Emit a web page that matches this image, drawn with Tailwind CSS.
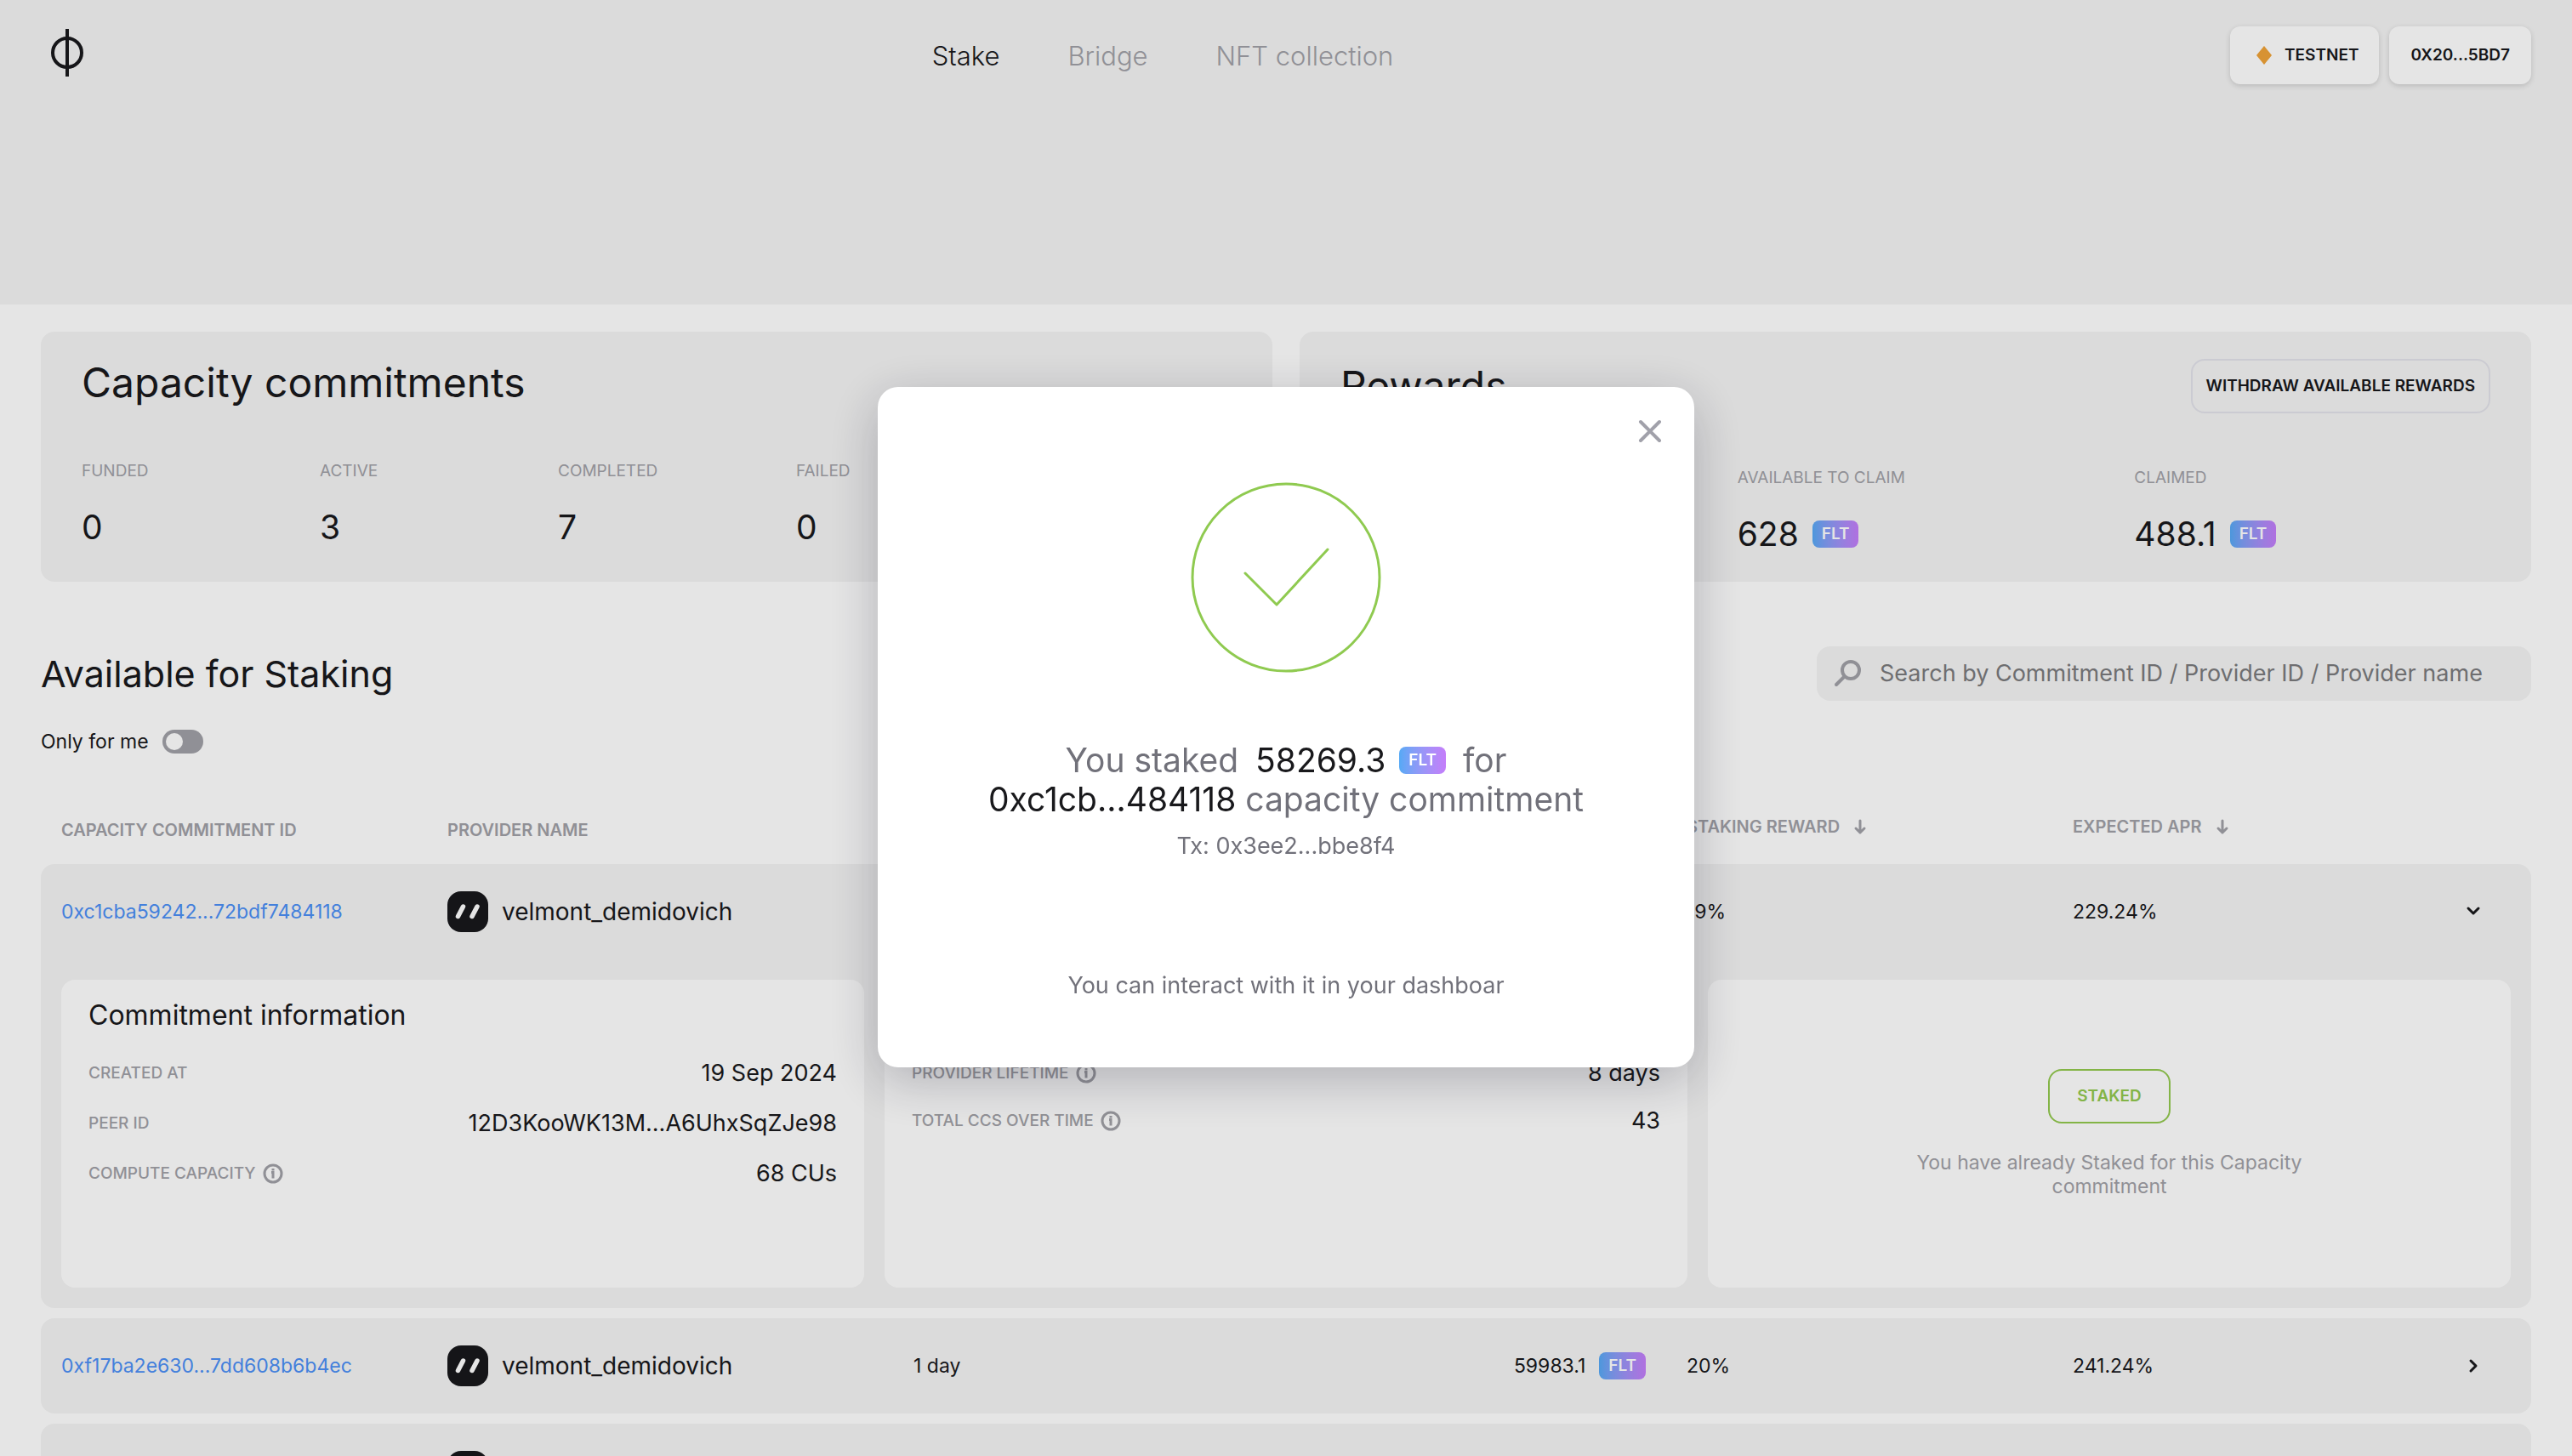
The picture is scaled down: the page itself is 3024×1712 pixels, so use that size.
<!DOCTYPE html>
<html lang="en">
<head>
<meta charset="utf-8">
<title>Stake</title>
<script src="https://cdn.jsdelivr.net/npm/@tailwindcss/browser@4"></script>
</head>
<body class="h-screen overflow-hidden bg-white font-['Inter',sans-serif] text-[#19191c]">

<header class="flex h-[358px] items-start justify-between bg-[#f4f4f4] px-12 pt-[31px]">
  <a href="#" aria-label="Home" class="flex w-16 justify-center pt-[3px]">
    <svg class="h-14 w-10" viewBox="0 0 40 56" fill="none" stroke="currentColor" stroke-width="4"><circle cx="19" cy="28" r="17"/><path d="M19 0v56"/></svg>
  </a>
  <nav class="flex h-[70px] items-center gap-20 text-[31px] leading-10 font-light text-[#a1a1a7]">
    <a href="#" class="text-[#19191c]">Stake</a>
    <a href="#">Bridge</a>
    <a href="#">NFT collection</a>
  </nav>
  <div class="flex gap-3 text-[19px] font-semibold">
    <button class="flex h-[68px] items-center gap-3 rounded-xl bg-white pr-6 pl-7 shadow-[0_2px_6px_rgba(0,0,0,0.15)]">
      <svg class="h-6 w-6" viewBox="0 0 24 24" fill="#f0a338"><path d="M12 1l9 11-9 11-9-11z"/></svg>
      TESTNET
    </button>
    <button class="h-[68px] rounded-xl bg-white px-[25px] shadow-[0_2px_6px_rgba(0,0,0,0.15)]">0X20...5BD7</button>
  </div>
</header>

<main class="px-12 pt-8">
  <div class="grid grid-cols-2 gap-8">
    <section class="rounded-2xl bg-[#f4f4f4] px-12 pt-8 pb-8">
      <h2 class="text-[48px] leading-14">Capacity commitments</h2>
      <dl class="mt-16 grid grid-cols-5 gap-12">
        <div><dt class="text-[19px] leading-6 text-[#a1a1a7]">FUNDED</dt><dd class="mt-[30px] text-[39px] leading-12">0</dd></div>
        <div><dt class="text-[19px] leading-6 text-[#a1a1a7]">ACTIVE</dt><dd class="mt-[30px] text-[39px] leading-12">3</dd></div>
        <div><dt class="text-[19px] leading-6 text-[#a1a1a7]">COMPLETED</dt><dd class="mt-[30px] text-[39px] leading-12">7</dd></div>
        <div><dt class="text-[19px] leading-6 text-[#a1a1a7]">FAILED</dt><dd class="mt-[30px] text-[39px] leading-12">0</dd></div>
      </dl>
    </section>
    <section class="rounded-2xl bg-[#f4f4f4] px-12 pt-8 pb-8">
      <div class="flex items-center justify-between">
        <h2 class="text-[48px] leading-14">Rewards</h2>
        <button class="h-16 rounded-2xl border-2 border-[#e3e3ea] px-4 text-[19px] font-semibold">WITHDRAW AVAILABLE REWARDS</button>
      </div>
      <dl class="mt-16 grid grid-cols-3 gap-12">
        <div></div>
        <div><dt class="text-[19px] leading-6 text-[#a1a1a7]">AVAILABLE TO CLAIM</dt><dd class="mt-[30px] flex items-center gap-4 text-[39px] leading-12">628 <span class="rounded-lg bg-linear-to-r from-[#55a9f5] to-[#c47dfa] px-[11px] text-[19px] leading-8 font-semibold text-white">FLT</span></dd></div>
        <div><dt class="text-[19px] leading-6 text-[#a1a1a7]">CLAIMED</dt><dd class="mt-[30px] flex items-center gap-4 text-[39px] leading-12">488.1 <span class="rounded-lg bg-linear-to-r from-[#55a9f5] to-[#c47dfa] px-[11px] text-[19px] leading-8 font-semibold text-white">FLT</span></dd></div>
      </dl>
    </section>
  </div>

  <div class="mt-19 flex items-center justify-between">
    <h2 class="text-[43px] leading-14">Available for Staking</h2>
    <label class="flex h-16 w-[840px] items-center gap-[22px] rounded-2xl bg-[#f4f4f4] px-5">
      <svg class="h-8 w-8 shrink-0" viewBox="0 0 32 32" fill="none" stroke="#a1a1a7" stroke-width="4" stroke-linecap="round"><circle cx="20" cy="12" r="10"/><path d="M12 20l-9 9"/></svg>
      <input type="search" aria-label="Search commitments" placeholder="Search by Commitment ID / Provider ID / Provider name" class="min-w-0 flex-1 bg-transparent text-[27px] outline-none placeholder:text-[#7b7b7d]">
    </label>
  </div>
  <label class="mt-[34px] flex h-7 w-fit items-center gap-4 text-[23px] leading-7">
    Only for me
    <input type="checkbox" role="switch" class="h-7 w-12 appearance-none rounded-full bg-[#a1a1a7] p-1 before:block before:h-5 before:w-5 before:rounded-full before:bg-white">
  </label>

  <table class="block">
    <thead class="block">
      <tr class="grid h-[130px] grid-cols-[454fr_548fr_909fr_454fr_515fr] items-end px-6 text-left text-[20px] leading-6 text-[#a1a1a7]">
        <th class="pb-7 font-semibold">CAPACITY COMMITMENT ID</th>
        <th class="pb-7 font-semibold">PROVIDER NAME</th>
        <th class="pb-7 font-semibold">EXPIRATION</th>
        <th class="pb-8 font-semibold"><button class="flex items-center gap-4">STAKING REWARD <svg class="h-5 w-4" viewBox="0 0 16 20" fill="none" stroke="currentColor" stroke-width="3" stroke-linecap="round" stroke-linejoin="round"><path d="M8 3v14M3 12l5 5 5-5"/></svg></button></th>
        <th class="pb-8 font-semibold"><button class="flex items-center gap-4">EXPECTED APR <svg class="h-5 w-4" viewBox="0 0 16 20" fill="none" stroke="currentColor" stroke-width="3" stroke-linecap="round" stroke-linejoin="round"><path d="M8 3v14M3 12l5 5 5-5"/></svg></button></th>
      </tr>
    </thead>
    <tbody class="mb-3 block rounded-2xl bg-[#f4f4f4] px-6 pb-6">
      <tr class="grid h-[136px] grid-cols-[454fr_548fr_909fr_454fr_515fr] pb-6 text-[23px] leading-7">
        <td class="flex items-center"><a href="#" class="text-[#4b8ff5]">0xc1cba59242...72bdf7484118</a></td>
        <td class="flex items-center gap-4 text-[28px]"><svg class="h-12 w-12" viewBox="0 0 48 48"><rect width="48" height="48" rx="16" fill="#18181b"/><path d="M12.500 29.500l6-11.500M29 29.500l6-11.500" stroke="#fff" stroke-width="5.500" stroke-linecap="round"/></svg>velmont_demidovich</td>
        <td class="flex items-center justify-between pr-12">1 day <span class="flex items-center gap-4">58269.3 <span class="rounded-lg bg-linear-to-r from-[#55a9f5] to-[#c47dfa] px-[11px] text-[19px] leading-8 font-semibold text-white">FLT</span></span></td>
        <td class="flex items-center">19%</td>
        <td class="flex items-center justify-between pr-8">229.24% <button aria-label="Collapse"><svg class="h-6 w-6" viewBox="0 0 24 24" fill="none" stroke="currentColor" stroke-width="3" stroke-linecap="round" stroke-linejoin="round"><path d="M6 8l6 6 6-6"/></svg></button></td>
      </tr>
      <tr class="grid h-[362px] grid-cols-3 gap-6">
        <td class="rounded-2xl bg-white px-8 pt-[18px]">
          <h3 class="text-[32px] leading-12">Commitment information</h3>
          <dl class="mt-6 flex flex-col gap-[19px]">
            <div class="flex h-10 items-center justify-between"><dt class="text-[19px] font-medium text-[#a1a1a7]">CREATED AT</dt><dd class="text-[27px]">19 Sep 2024</dd></div>
            <div class="flex h-10 items-center justify-between"><dt class="text-[19px] font-medium text-[#a1a1a7]">PEER ID</dt><dd class="text-[27px]">12D3KooWK13M...A6UhxSqZJe98</dd></div>
            <div class="flex h-10 items-center justify-between"><dt class="flex items-center gap-2 text-[19px] font-medium text-[#a1a1a7]">COMPUTE CAPACITY <svg class="h-6 w-6" viewBox="0 0 24 24" fill="none" stroke="currentColor" stroke-width="3"><circle cx="12" cy="12" r="10"/><path d="M10 10.500h2v7M12 6v2.500"/></svg></dt><dd class="text-[27px]">68 CUs</dd></div>
          </dl>
        </td>
        <td class="rounded-2xl bg-white px-8 pt-[18px]">
          <h3 class="text-[32px] leading-12">Provider information</h3>
          <dl class="mt-6 flex flex-col gap-4">
            <div class="flex h-10 items-center justify-between"><dt class="flex items-center gap-2 text-[19px] font-medium text-[#a1a1a7]">PROVIDER LIFETIME <svg class="h-6 w-6" viewBox="0 0 24 24" fill="none" stroke="currentColor" stroke-width="3"><circle cx="12" cy="12" r="10"/><path d="M10 10.500h2v7M12 6v2.500"/></svg></dt><dd class="text-[27px]">8 days</dd></div>
            <div class="flex h-10 items-center justify-between"><dt class="flex items-center gap-2 text-[19px] font-medium text-[#a1a1a7]">TOTAL CCS OVER TIME <svg class="h-6 w-6" viewBox="0 0 24 24" fill="none" stroke="currentColor" stroke-width="3"><circle cx="12" cy="12" r="10"/><path d="M10 10.500h2v7M12 6v2.500"/></svg></dt><dd class="text-[27px]">43</dd></div>
          </dl>
        </td>
        <td class="flex flex-col items-center justify-center gap-8 rounded-2xl bg-white">
          <button class="h-16 rounded-2xl border-2 border-[#92c94f] px-8 text-[19px] font-semibold text-[#92c94f]">STAKED</button>
          <p class="w-[500px] text-center text-[23px] leading-7 text-[#a1a1a7]">You have already Staked for this Capacity commitment</p>
        </td>
      </tr>
    </tbody>
    <tbody class="mb-3 block rounded-2xl bg-[#f4f4f4] px-6">
      <tr class="grid h-28 grid-cols-[454fr_548fr_909fr_454fr_515fr] text-[23px] leading-7">
        <td class="flex items-center"><a href="#" class="text-[#4b8ff5]">0xf17ba2e630...7dd608b6b4ec</a></td>
        <td class="flex items-center gap-4 text-[28px]"><svg class="h-12 w-12" viewBox="0 0 48 48"><rect width="48" height="48" rx="16" fill="#18181b"/><path d="M12.500 29.500l6-11.500M29 29.500l6-11.500" stroke="#fff" stroke-width="5.500" stroke-linecap="round"/></svg>velmont_demidovich</td>
        <td class="flex items-center justify-between pr-12">1 day <span class="flex items-center gap-4">59983.1 <span class="rounded-lg bg-linear-to-r from-[#55a9f5] to-[#c47dfa] px-[11px] text-[19px] leading-8 font-semibold text-white">FLT</span></span></td>
        <td class="flex items-center">20%</td>
        <td class="flex items-center justify-between pr-8">241.24% <button aria-label="Expand"><svg class="h-6 w-6" viewBox="0 0 24 24" fill="none" stroke="currentColor" stroke-width="3" stroke-linecap="round" stroke-linejoin="round"><path d="M9 6l6 6-6 6"/></svg></button></td>
      </tr>
    </tbody>
    <tbody class="block rounded-2xl bg-[#f4f4f4] px-6">
      <tr class="grid h-28 grid-cols-[454fr_548fr_909fr_454fr_515fr] text-[23px] leading-7">
        <td></td>
        <td class="flex items-center"><svg class="h-12 w-12" viewBox="0 0 48 48"><rect width="48" height="48" rx="16" fill="#18181b"/></svg></td>
      </tr>
    </tbody>
  </table>
</main>

<div class="fixed inset-0 flex items-center justify-center bg-black/10 pb-0.5">
  <div role="dialog" aria-modal="true" class="relative flex h-[800px] w-[960px] flex-col items-center rounded-3xl bg-white pt-28 text-center text-[#71717a] shadow-[0_16px_60px_rgba(20,20,40,0.25)]">
    <button aria-label="Close" class="absolute top-8 right-8"><svg class="h-10 w-10" viewBox="0 0 40 40" fill="none" stroke="#a1a1aa" stroke-width="4" stroke-linecap="round"><path d="M9 9l22 22M31 9L9 31"/></svg></button>
    <svg class="h-56 w-56 shrink-0" viewBox="0 0 224 224" fill="none" stroke="#8fca50" stroke-width="3" stroke-linecap="round" stroke-linejoin="round"><circle cx="112" cy="112" r="110"/><path d="M64 107l37 37 60-65"/></svg>
    <div class="mt-20 text-[39px] leading-[46px]">
      <p class="flex items-center justify-center"><span>You staked</span><span class="ml-5 text-[#19191c]">58269.3</span><span class="ml-4 rounded-lg bg-linear-to-r from-[#55a9f5] to-[#c47dfa] px-[11px] text-[19px] leading-8 font-semibold text-white">FLT</span><span class="ml-5">for</span></p>
      <p><span class="text-[#19191c]">0xc1cb...484118</span> capacity commitment</p>
    </div>
    <p class="mt-3 text-[27px] leading-10">Tx: 0x3ee2...bbe8f4</p>
    <p class="mt-31 text-[27px] leading-10">You can interact with it in your dashboar</p>
  </div>
</div>
</body>
</html>
